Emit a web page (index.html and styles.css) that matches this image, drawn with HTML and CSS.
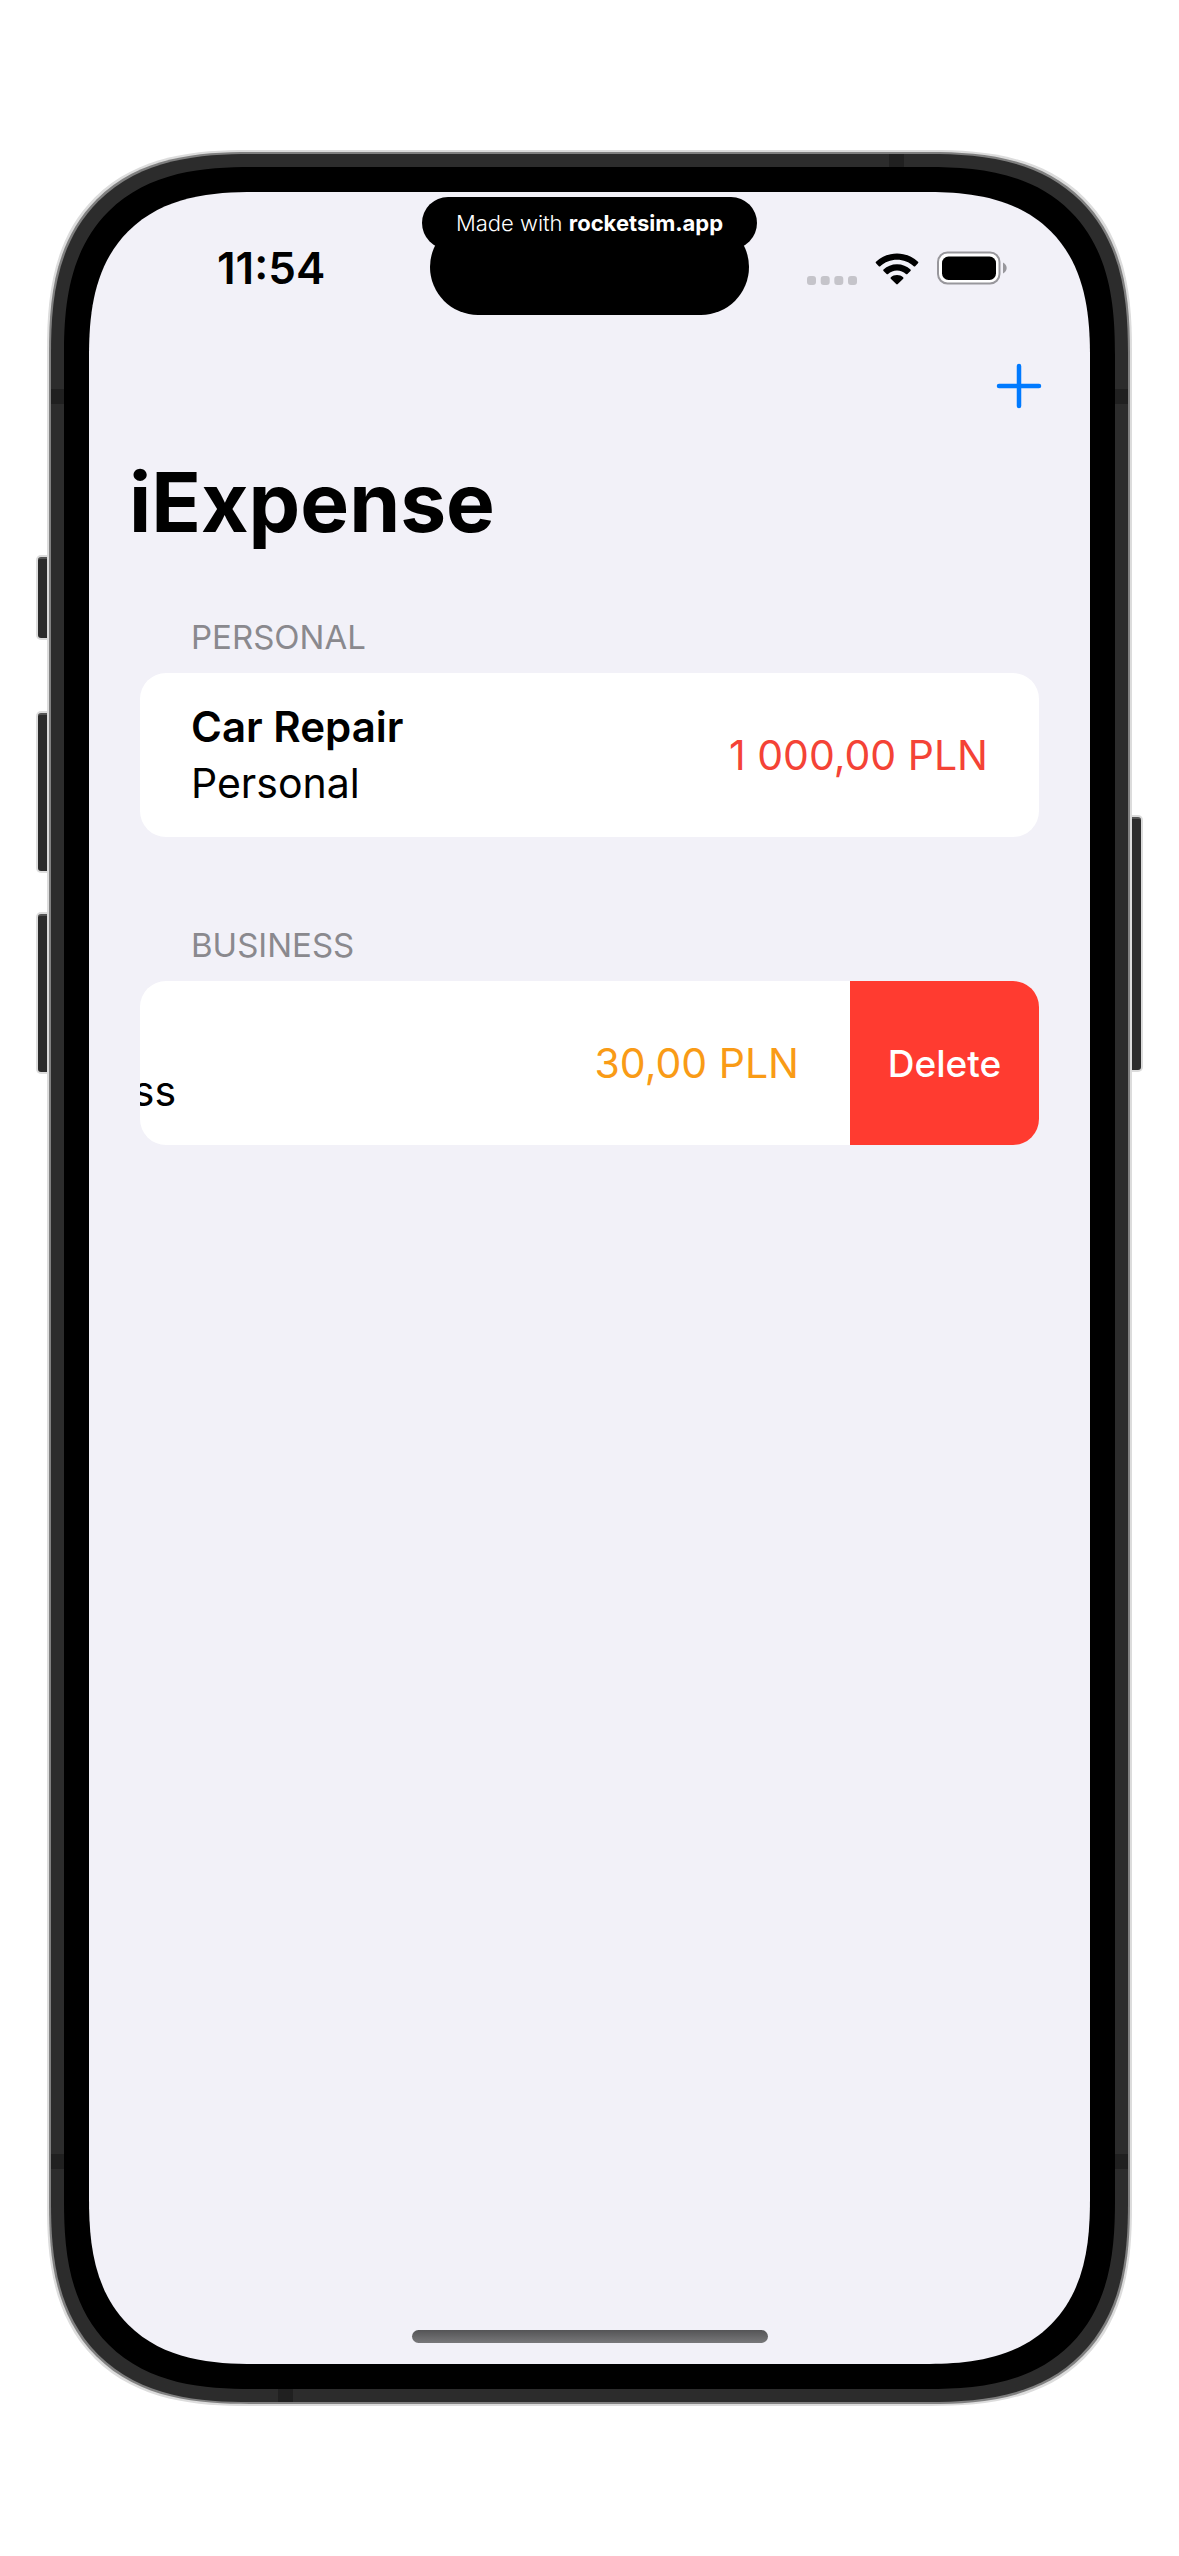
FILE: index.html
```html
<!DOCTYPE html>
<html lang="en">
<head>
<meta charset="utf-8">
<meta name="viewport" content="width=device-width, initial-scale=1">
<title>iExpense</title>
<link rel="stylesheet" href="styles.css">
</head>
<body>
<div class="phone">
  <span class="key key-action"></span>
  <span class="key key-up"></span>
  <span class="key key-down"></span>
  <span class="key key-side"></span>
  <div class="frame">
    <span class="band band-left band-high"></span>
    <span class="band band-right band-high"></span>
    <span class="band band-left band-low"></span>
    <span class="band band-right band-low"></span>
    <span class="band band-top"></span>
    <span class="band band-bottom"></span>
    <div class="bezel">
      <div class="screen">
        <header class="status-bar">
          <time class="clock">11:54</time>
          <div class="island">
            <p class="badge">Made with <b>rocketsim.app</b></p>
          </div>
          <div class="indicators">
            <svg class="signal" viewBox="0 0 50 9" width="50" height="9" aria-hidden="true">
              <g fill="#c5c4ca">
                <rect width="9" height="9" rx="3"/>
                <rect x="13.7" width="9" height="9" rx="3"/>
                <rect x="27.3" width="9" height="9" rx="3"/>
                <rect x="41" width="9" height="9" rx="3"/>
              </g>
            </svg>
            <svg class="wifi" viewBox="0 0 44 32" width="44" height="32" aria-hidden="true">
              <path d="M22 0.5C30.200 0.500 37.500 3.600 43 8.800Q43.700 9.500 43 10.200L40.200 13.200Q39.500 13.900 38.700 13.200C34.200 9 28.400 6.700 22 6.700S9.800 9 5.300 13.200Q4.500 13.900 3.800 13.200L1 10.200Q0.300 9.500 1 8.800C6.500 3.600 13.800 0.500 22 0.500Z"/>
              <path d="M22 11.200C27.300 11.200 31.900 13.200 35.500 16.500Q36.200 17.200 35.500 17.900L32.400 21Q31.700 21.700 30.900 21C28.500 18.800 25.400 17.500 22 17.500S15.500 18.800 13.100 21Q12.300 21.700 11.600 21L8.500 17.900Q7.800 17.200 8.500 16.500C12.100 13.200 16.700 11.200 22 11.200Z"/>
              <path d="M22 22C24.400 22 26.500 22.900 28.100 24.300Q28.900 25 28.200 25.700L22.800 31.100Q22 31.900 21.200 31.100L15.800 25.700Q15.100 25 15.900 24.300C17.500 22.900 19.600 22 22 22Z"/>
            </svg>
            <svg class="battery" viewBox="0 0 70 34" width="70" height="34" aria-hidden="true">
              <rect x="1" y="1.500" width="61.500" height="31" rx="9.500" fill="#fff" stroke="#98979c" stroke-width="2"/>
              <rect x="5" y="5.500" width="54" height="23.500" rx="6.500"/>
              <path d="M66 11.500C68 12.500 69.700 14.500 69.700 17S68 21.500 66 22.500Z" fill="#98979c"/>
            </svg>
          </div>
        </header>
        <nav class="toolbar">
          <button class="add" type="button" aria-label="Add">
            <svg viewBox="0 0 46 46" width="46" height="46" aria-hidden="true">
              <path d="M23 3V43M3 23H43" stroke="#007aff" stroke-width="4.500" stroke-linecap="round"/>
            </svg>
          </button>
        </nav>
        <main class="content">
          <h1 class="title">iExpense</h1>
          <section class="group">
            <h2 class="group-name">PERSONAL</h2>
            <div class="card">
              <div class="row">
                <div class="details">
                  <h3 class="name">Car Repair</h3>
                  <p class="type">Personal</p>
                </div>
                <span class="amount amount-high">1&nbsp;000,00&nbsp;PLN</span>
              </div>
            </div>
          </section>
          <section class="group">
            <h2 class="group-name">BUSINESS</h2>
            <div class="card">
              <div class="row">
                <div class="details">
                  <p class="type">Business</p>
                </div>
                <span class="amount amount-mid">30,00&nbsp;PLN</span>
              </div>
              <button class="delete" type="button">Delete</button>
            </div>
          </section>
        </main>
        <span class="home-bar"></span>
      </div>
    </div>
  </div>
</div>
</body>
</html>
```
FILE: styles.css
```css
* {
  box-sizing: border-box;
}

body {
  margin: 0;
  background: #fff;
  color: #000;
  font-family: Inter, "Liberation Sans", sans-serif;
}

h1, h2, h3, p {
  margin: 0;
}

button {
  margin: 0;
  padding: 0;
  border: 0;
  background: none;
  font: inherit;
}

svg {
  display: block;
}

/* Device */

.phone {
  position: relative;
  display: flex;
  flex-direction: column;
  margin: 150px 47px;
  min-height: calc(100vh - 300px);
}

.frame,
.bezel,
.screen {
  flex: 1;
  display: flex;
  flex-direction: column;
  corner-shape: superellipse(1.36);
}

.frame {
  position: relative;
  margin: 4px;
  padding: 13px;
  border-radius: 200px;
  background: #2c2c2c;
  box-shadow: 0 0 0 2px #808080, 0 0 0 4px #dcdcdc;
}

.bezel {
  position: relative;
  padding: 25px;
  border-radius: 188px;
  background: #000;
}

.screen {
  border-radius: 166px;
  background: #f2f1f8;
}

.key {
  position: absolute;
  left: -9px;
  width: 12px;
  border-top: 2px solid #555;
  border-radius: 3px 0 0 3px;
  background: #2c2c2c;
  box-shadow: 0 0 0 2px #dcdcdc;
}

.key-action {
  top: 407px;
  height: 81px;
}

.key-up {
  top: 563px;
  height: 158px;
}

.key-down {
  top: 764px;
  height: 158px;
}

.key-side {
  left: auto;
  right: -9px;
  top: 667px;
  height: 253px;
  border-radius: 0 3px 3px 0;
}

.band {
  position: absolute;
  width: 13px;
  height: 15px;
  background: #202020;
}

.band-left { left: 0; }
.band-right { right: 0; }
.band-high { top: 235px; }
.band-low { bottom: 233px; }

.band-top,
.band-bottom {
  width: 15px;
  height: 13px;
}

.band-top {
  top: 0;
  right: 224px;
}

.band-bottom {
  bottom: 0;
  left: 227px;
}

/* Status bar */

.status-bar {
  display: grid;
  grid-template-columns: 1fr 319px 1fr;
  align-items: center;
  height: 151px;
}

.clock {
  padding-left: 128px;
  font-size: 44px;
  font-weight: 600;
  line-height: 50px;
}

.island {
  position: relative;
  align-self: start;
  display: flex;
  justify-content: center;
  height: 118px;
  margin: 5px -8px 0;
}

.island::before {
  content: "";
  position: absolute;
  inset: 22px 8px 0;
  border-radius: 48px;
  background: #000;
}

.badge {
  position: relative;
  flex: 1;
  height: 52px;
  border-radius: 26px;
  background: #000;
  color: #fff;
  font-size: 22px;
  font-weight: 300;
  line-height: 52px;
  text-align: center;
  white-space: nowrap;
}

.badge b {
  font-weight: 700;
}

.indicators {
  display: flex;
  justify-content: flex-end;
  align-items: flex-end;
  gap: 18px;
  padding-right: 83px;
}

/* Navigation */

.toolbar {
  display: flex;
  justify-content: flex-end;
  align-items: center;
  height: 86px;
  padding-right: 48px;
}

.add {
  cursor: pointer;
}

.title {
  margin: 24px 40px 0;
  font-size: 82px;
  font-weight: 700;
  line-height: 100px;
}

/* Expense list */

.group {
  margin: 72px 51px 0;
}

.title + .group {
  margin-top: 48px;
}

.group-name {
  padding-left: 51px;
  color: #8a898e;
  font-size: 33px;
  font-weight: 400;
  line-height: 72px;
}

.card {
  display: flex;
  justify-content: flex-end;
  overflow: hidden;
  border-radius: 26px;
  background: #fff;
}

.row {
  flex: 0 0 100%;
  display: flex;
  justify-content: space-between;
  align-items: center;
  min-height: 164px;
  padding: 25px 51px;
  font-size: 41px;
  line-height: 57px;
}

.details {
  align-self: flex-end;
}

.name {
  font-size: 42px;
  font-weight: 600;
}

.amount-high { color: #f44336; }
.amount-mid { color: #f99b16; }

.delete {
  flex: 0 0 189px;
  background: #ff3b30;
  color: #fff;
  font-size: 37px;
  font-weight: 500;
  cursor: pointer;
}

.home-bar {
  align-self: center;
  width: 356px;
  height: 13px;
  margin: auto 0 21px;
  border-radius: 7px;
  background: linear-gradient(#545456, #78787a);
}
```
